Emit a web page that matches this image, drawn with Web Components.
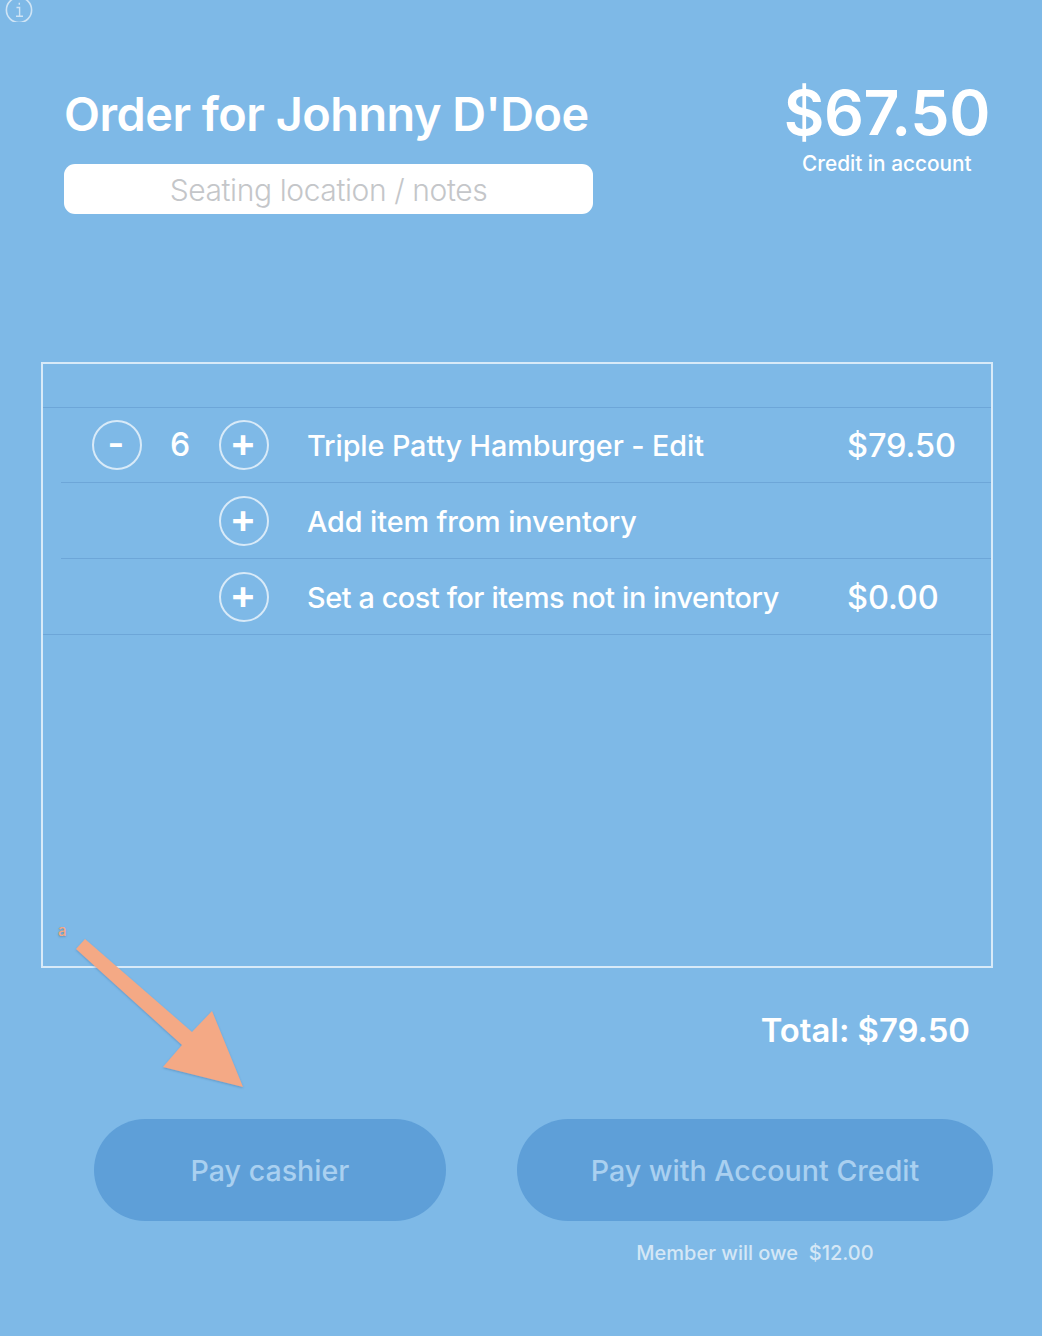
<!DOCTYPE html>
<html><head><meta charset="utf-8">
<style>
html,body{margin:0;padding:0;background:#7eb9e7}
body{width:1042px;height:1336px;overflow:hidden;font-family:Inter,"Liberation Sans",sans-serif;color:#fff}
</style></head><body>
<order-screen></order-screen>
<template id="t-screen">
<style>
:host{display:flex;flex-direction:column;position:relative;width:1042px;height:1336px;box-sizing:border-box}
.info{display:block;margin:-4px 0 0 5px;height:26px;width:30px}
.head{display:flex;justify-content:space-between;margin-top:62px;padding:0 52px 0 64px;height:278px;box-sizing:border-box}
h1{margin:0;font:600 46.8px/60px Inter,sans-serif;letter-spacing:-.5px;white-space:nowrap}
.notes{margin-top:20px;width:529px;height:50px;box-sizing:border-box;background:#fff;border-radius:11px;color:#c4c6c9;font:300 30px/52px Inter,sans-serif;text-align:center;letter-spacing:-.4px}
.credit{display:flex;flex-direction:column;align-items:center;margin-top:-8px}
.amount{font:600 62.5px/72px Inter,sans-serif;letter-spacing:-.4px}
.lbl{font:500 20.8px/26px Inter,sans-serif;margin-top:3px}
.list{margin-left:41px;width:952px;height:606px;box-sizing:border-box;border:2px solid #d8eaf8;padding-top:43px;display:flex;flex-direction:column}
.total{text-align:right;padding-right:72px;margin-top:40px;font:600 32.8px/44px Inter,sans-serif;height:111px}
.btns{display:flex;padding-left:94px;gap:71px}
.note{margin:19px 0 0 517px;width:476px;text-align:center;font:500 20px/26px Inter,sans-serif;color:#d4e7f6}
.arrow{position:absolute;left:0;top:0;pointer-events:none}
.a{position:absolute;left:58px;top:923px;font:500 15px/16px Inter,sans-serif;color:#f4a985;text-shadow:0 1px 2px rgba(60,90,120,.45)}
</style>
<svg class="info" viewBox="0 0 30 26" fill="none" stroke="#cfe4f5" stroke-width="1.6"><circle cx="14" cy="14" r="12.6"/><path d="M11.5 11.5H14.6V20M11 20.2H18M14.3 6.8v2" stroke-width="1.4"/></svg>
<div class="head">
  <div><h1>Order for Johnny D'Doe</h1><div class="notes">Seating location / notes</div></div>
  <div class="credit"><div class="amount">$67.50</div><div class="lbl">Credit in account</div></div>
</div>
<div class="list">
  <order-row first qty="6" minus name="Triple Patty Hamburger - Edit" price="$79.50"></order-row>
  <order-row inset name="Add item from inventory"></order-row>
  <order-row inset last style="--ls:-.4px" name="Set a cost for items not in inventory" price="$0.00"></order-row>
</div>
<div class="total">Total: $79.50</div>
<div class="btns"><pay-button style="width:352px">Pay cashier</pay-button><pay-button style="width:476px">Pay with Account Credit</pay-button></div>
<div class="note">Member will owe&nbsp; $12.00</div>
<span class="a">a</span>
<svg class="arrow" width="1042" height="1336"><defs><filter id="s" x="-10%" y="-10%" width="120%" height="120%"><feDropShadow dx="0" dy="1" stdDeviation="1" flood-color="#3a6a96" flood-opacity=".45"/></filter></defs><polygon filter="url(#s)" fill="#f4a985" points="85,939 76,949 182,1045 163,1067 243,1087 212,1011 192,1032"/></svg>
</template>
<template id="t-row">
<style>
:host{display:grid;grid-template-columns:50px 77px 50px 38px 540px auto;align-items:center;height:76px;box-sizing:border-box;padding-left:49px;position:relative;font:500 28.8px/36px Inter,sans-serif}
:host([first]){height:75px;padding-top:1px}
:host([inset]){padding-top:2px}
:host::before{content:"";position:absolute;left:0;right:0;top:0;height:1px;background:#6da6d8}
:host([inset])::before{left:18px}
:host([last]){border-bottom:1px solid #6da6d8;height:77px}
.q{text-align:center;font-size:32px;padding-right:1px}
.n{white-space:nowrap;letter-spacing:var(--ls,-.1px);padding-top:1px}
.p{font-size:32.5px;letter-spacing:-.1px;padding-top:2px}
.m{display:flex}
.m round-btn{font-size:36px;padding-right:2px}
</style>
<span id="m" class="m"></span><span class="q" id="q"></span><round-btn>+</round-btn><span></span><span class="n" id="n"></span><span class="p" id="p"></span>
</template>
<template id="t-round">
<style>
:host{display:flex;align-items:center;justify-content:center;width:50px;height:50px;box-sizing:border-box;border:2px solid #d8eaf8;border-radius:50%;font:600 40px/1 Inter,sans-serif;padding:0 2px 5px 0}
</style><slot></slot>
</template>
<template id="t-pay">
<style>
:host{display:flex;align-items:center;justify-content:center;height:102px;box-sizing:border-box;padding-top:2px;background:#5e9fd8;border-radius:51px;color:#a9d0f0;font:500 28.6px/36px Inter,sans-serif}
</style><slot></slot>
</template>
<script>
function def(name,tid,init){customElements.define(name,class extends HTMLElement{constructor(){super();this.attachShadow({mode:'open'}).appendChild(document.getElementById(tid).content.cloneNode(true));}connectedCallback(){init&&init(this)}})}
def('round-btn','t-round');
def('pay-button','t-pay');
def('order-row','t-row',h=>{const s=h.shadowRoot;
 s.getElementById('n').textContent=h.getAttribute('name');
 s.getElementById('p').textContent=h.getAttribute('price')||'';
 s.getElementById('q').textContent=h.getAttribute('qty')||'';
 if(h.hasAttribute('minus')){const r=document.createElement('round-btn');r.textContent='-';s.getElementById('m').appendChild(r);}
});
def('order-screen','t-screen');
</script>
</body></html>
